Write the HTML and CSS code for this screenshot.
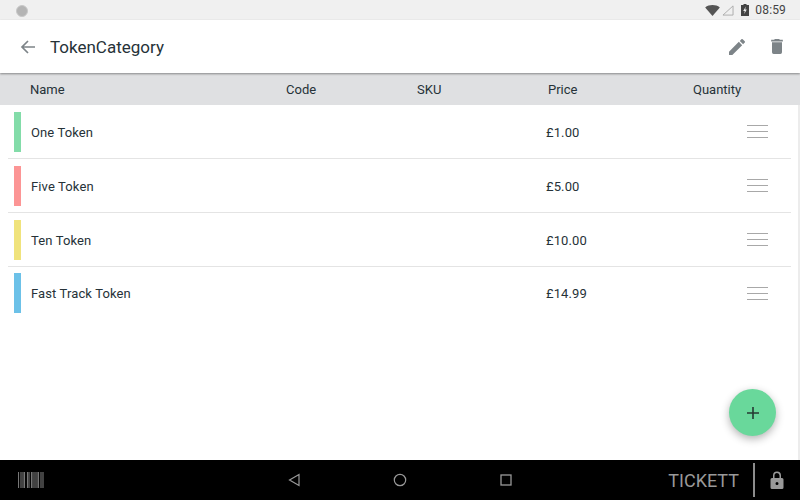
FILE: index.html
```html
<!DOCTYPE html>
<html lang="en">
<head>
<meta charset="utf-8">
<title>TokenCategory</title>
<link rel="stylesheet" href="styles.css">
</head>
<body>
<div class="screen">
  <div class="status">
    <span class="dot"></span>
    <div class="status-right">
      <svg class="wifi" width="15" height="11" viewBox="0 0 16 12"><path d="M0 2.6C2.2.9 5 0 8 0s5.800.9 8 2.600L8 12z" fill="#555"/></svg>
      <svg class="signal" width="12" height="11" viewBox="0 0 13 12"><path d="M12 1v10H1z" fill="none" stroke="#aaa" stroke-width="1"/></svg>
      <svg class="battery" width="8" height="12" viewBox="0 0 8 12"><path d="M2.500 0h3v1H8v11H0V1h2.500z" fill="#444"/><path d="M4.800 2.500 2.200 7h1.600l-.6 3 2.600-4.500H4.200z" fill="#eee"/></svg>
      <span class="clock">08:59</span>
    </div>
  </div>
  <header class="toolbar">
    <svg class="back" width="16" height="14" viewBox="0 0 16 14"><path d="M15 7H2M8 1 2 7l6 6" fill="none" stroke="#7d8488" stroke-width="1.700"/></svg>
    <h1 class="title">TokenCategory</h1>
    <svg class="edit" width="16" height="16" viewBox="3 3 18 18"><path d="M3 17.250V21h3.750L17.810 9.940l-3.750-3.750L3 17.250zM20.710 7.040a1 1 0 0 0 0-1.410l-2.340-2.340a1 1 0 0 0-1.410 0l-1.830 1.830 3.750 3.750 1.830-1.830z" fill="#7d8488"/></svg>
    <svg class="trash" width="12" height="15" viewBox="5 3 14 18"><path d="M6 19a2 2 0 0 0 2 2h8a2 2 0 0 0 2-2V7H6v12zM19 4h-3.500l-1-1h-5l-1 1H5v2h14V4z" fill="#7d8488"/></svg>
  </header>
  <div class="columns">
    <span class="col-name">Name</span>
    <span class="col-code">Code</span>
    <span class="col-sku">SKU</span>
    <span class="col-price">Price</span>
    <span class="col-qty">Quantity</span>
  </div>
  <main class="list">
    <div class="row">
      <span class="swatch green"></span>
      <span class="row-name">One Token</span>
      <span class="row-price">£1.00</span>
      <span class="handle"><i></i><i></i><i></i></span>
    </div>
    <div class="row">
      <span class="swatch red"></span>
      <span class="row-name">Five Token</span>
      <span class="row-price">£5.00</span>
      <span class="handle"><i></i><i></i><i></i></span>
    </div>
    <div class="row">
      <span class="swatch yellow"></span>
      <span class="row-name">Ten Token</span>
      <span class="row-price">£10.00</span>
      <span class="handle"><i></i><i></i><i></i></span>
    </div>
    <div class="row">
      <span class="swatch blue"></span>
      <span class="row-name">Fast Track Token</span>
      <span class="row-price">£14.99</span>
      <span class="handle"><i></i><i></i><i></i></span>
    </div>
    <button class="fab" aria-label="Add">
      <svg width="12" height="12" viewBox="0 0 12 12"><path d="M6 0v12M0 6h12" stroke="#263a33" stroke-width="1.600" fill="none"/></svg>
    </button>
  </main>
  <footer class="navbar">
    <svg class="barcode" width="26" height="16" viewBox="0 0 26 16"><path d="M0.500 0v16M3 0v16M5 0v16M6.500 0v16M9.500 0v16M11 0v16M13.500 0v16M15 0v16M17 0v16M19 0v16M20.500 0v16M23 0v16M25 0v16" stroke="#777" stroke-width="1.100" fill="none"/></svg>
    <div class="nav-keys">
      <svg width="12" height="14" viewBox="0 0 12 14"><path d="M11 1.500v11L1.500 7z" fill="none" stroke="#999" stroke-width="1.200"/></svg>
      <svg width="14" height="14" viewBox="0 0 14 14"><circle cx="7" cy="7" r="5.700" fill="none" stroke="#999" stroke-width="1.200"/></svg>
      <svg width="12" height="12" viewBox="0 0 12 12"><rect x="1" y="1" width="10" height="10" fill="none" stroke="#999" stroke-width="1.300"/></svg>
    </div>
    <span class="brand">TICKETT</span>
    <span class="sep"></span>
    <svg class="lock" width="14" height="18" viewBox="0 0 14 18"><path d="M2 7h1V4.500a4 4 0 0 1 8 0V7h1a1.500 1.500 0 0 1 1.500 1.500v8A1.500 1.500 0 0 1 12 18H2a1.500 1.500 0 0 1-1.500-1.500v-8A1.500 1.500 0 0 1 2 7zm2.500 0h5V4.500a2.500 2.500 0 0 0-5 0V7zM7 11a1.500 1.500 0 1 0 0 3 1.500 1.500 0 0 0 0-3z" fill="#999" fill-rule="evenodd"/></svg>
  </footer>
</div>
</body>
</html>
```
FILE: styles.css
```css
* { box-sizing: border-box; }
html, body { margin: 0; padding: 0; }
body { font-family: Roboto, "Liberation Sans", sans-serif; color: #263238; background: #fff; }
.screen { width: 800px; height: 500px; display: flex; flex-direction: column; overflow: hidden; }

.status { height: 20px; flex: none; background: #f0f0f0; display: flex; align-items: center; justify-content: space-between; padding: 1px 14px 0 16px; }
.dot { width: 12px; height: 12px; border-radius: 50%; background: #b4b4b4; border: 1px solid #c8c8c8; }
.status-right { display: flex; align-items: center; margin-top: -1px; }
.wifi { margin-right: 2px; }
.signal { margin-right: 7px; }
.battery { margin-right: 6px; }
.clock { font-size: 12px; color: #444; letter-spacing: .15px; }

.toolbar { height: 53px; flex: none; background: #fff; display: flex; align-items: center; padding: 0 17px 0 20px; position: relative; z-index: 2; box-shadow: 0 1px 2px rgba(0,0,0,.4); }
.title { margin: 0 0 0 14px; font-size: 17px; font-weight: 400; flex: 1; color: #263238; }
.edit { margin-right: 26px; }

.columns { height: 32px; flex: none; background: #dfe0e2; font-size: 13px; display: grid; grid-template-columns: 256px 131px 131px 145px auto; padding-left: 30px; align-items: center; }

.list { flex: 1; position: relative; padding: 0 7px 0 8px; border-right: 2px solid #ececec; }
.row { height: 54px; display: grid; grid-template-columns: 7px 525px 201px 21px; align-items: center; padding-left: 6px; border-bottom: 1px solid #e4e4e4; font-size: 13px; letter-spacing: .12px; }
.row:last-of-type { height: 52px; border-bottom: 0; }
.swatch { height: 40px; }
.row-name { padding: 1px 0 0 10px; }
.row-price { padding-top: 1px; }
.green { background: #83dca9; }
.red { background: #fc9595; }
.yellow { background: #f0e37c; }
.blue { background: #6cc1e8; }
.handle { display: flex; flex-direction: column; gap: 5px; }
.handle i { display: block; height: 1px; background: #a8a8a8; }

.fab { position: absolute; left: 729px; top: 284px; width: 47px; height: 47px; border: 0; padding: 0; border-radius: 50%; background: #69d89b; display: flex; align-items: center; justify-content: center; box-shadow: 0 3px 8px rgba(0,0,0,.3); }

.navbar { height: 40px; flex: none; background: #000; display: flex; align-items: center; padding: 0 16px 0 18px; }
.nav-keys { display: flex; align-items: center; gap: 93px; margin-left: 244px; flex: 1; }
.brand { font-size: 18px; color: #999; margin-right: 14px; }
.sep { width: 2px; height: 34px; background: #8c8c8c; margin-right: 15px; }
```
